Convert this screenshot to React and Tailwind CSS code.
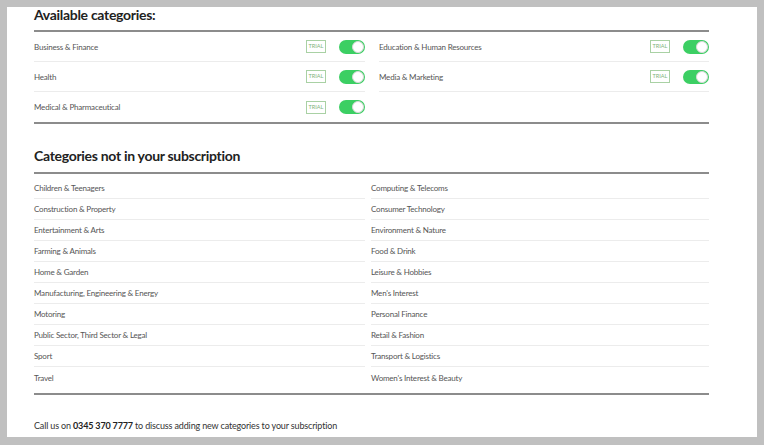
import React from 'react';

const available = [
  ['Business & Finance', 'Education & Human Resources'],
  ['Health', 'Media & Marketing'],
  ['Medical & Pharmaceutical', null],
];

const notSubscribed = [
  ['Children & Teenagers', 'Computing & Telecoms'],
  ['Construction & Property', 'Consumer Technology'],
  ['Entertainment & Arts', 'Environment & Nature'],
  ['Farming & Animals', 'Food & Drink'],
  ['Home & Garden', 'Leisure & Hobbies'],
  ['Manufacturing, Engineering & Energy', "Men's Interest"],
  ['Motoring', 'Personal Finance'],
  ['Public Sector, Third Sector & Legal', 'Retail & Fashion'],
  ['Sport', 'Transport & Logistics'],
  ['Travel', "Women's Interest & Beauty"],
];

function Toggle() {
  return (
    <div className="w-[26px] h-[14px] rounded-full bg-[#3ccf63] relative shrink-0">
      <div className="absolute right-[1px] top-[1px] w-[12px] h-[12px] rounded-full bg-white border border-[#d8d8d8]" />
    </div>
  );
}

function AvailableRow({ name, last }) {
  if (!name) {
    return <div className={`h-[30px] ${last ? '' : 'border-b border-[#ececec]'}`} />;
  }
  return (
    <div className={`h-[30px] flex items-center ${last ? '' : 'border-b border-[#ececec]'}`}>
      <span className="flex-1 text-[8px] tracking-[-0.2px] text-[#555]">{name}</span>
      <span className="w-[20px] h-[13px] border border-[#a9d1a4] text-[#7fb47a] text-[5.5px] flex items-center justify-center mr-[13px]">
        TRIAL
      </span>
      <Toggle />
    </div>
  );
}

export default function App() {
  return (
    <div className="w-[764px] h-[445px] bg-[#c0c0c0] pt-[7px] pl-[7px] overflow-hidden" style={{ fontFamily: 'Lato, "Open Sans", sans-serif' }}>
      <div className="w-[750px] h-[430px] bg-white pl-[27px]">
        <div className="w-[675px]">
          <h2 className="text-[14px] tracking-[-0.3px] leading-[16px] font-bold text-[#222] mb-[7px]">Available categories:</h2>
          <div className="border-t-2 border-b-2 border-[#8c8c8c] grid grid-cols-[331px_330px] gap-x-[14px]">
            {available.map((row, i) => (
              <React.Fragment key={i}>
                <AvailableRow name={row[0]} last={i === available.length - 1} />
                <AvailableRow name={row[1]} last={i === available.length - 1} />
              </React.Fragment>
            ))}
          </div>

          <h2 className="mt-[22px] text-[14px] tracking-[-0.3px] leading-[20px] font-bold text-[#222] mb-[6px]">
            Categories not in your subscription
          </h2>
          <div className="border-t-2 border-b-2 border-[#8c8c8c] pt-[4px] pb-[5px] grid grid-cols-[331px_338px] gap-x-[6px]">
            {notSubscribed.map((row, i) => (
              <React.Fragment key={i}>
                {row.map((name) => (
                  <div
                    key={name}
                    className={`h-[21px] flex items-center text-[8px] tracking-[-0.2px] text-[#555] ${i === notSubscribed.length - 1 ? '' : 'border-b border-[#ececec]'}`}
                  >
                    {name}
                  </div>
                ))}
              </React.Fragment>
            ))}
          </div>

          <p className="mt-[24px] text-[9px] tracking-[-0.15px] leading-[14px] text-[#333]">
            Call us on <span className="font-bold text-[#222]">0345 370 7777</span> to discuss adding new categories to your subscription
          </p>
        </div>
      </div>
    </div>
  );
}
